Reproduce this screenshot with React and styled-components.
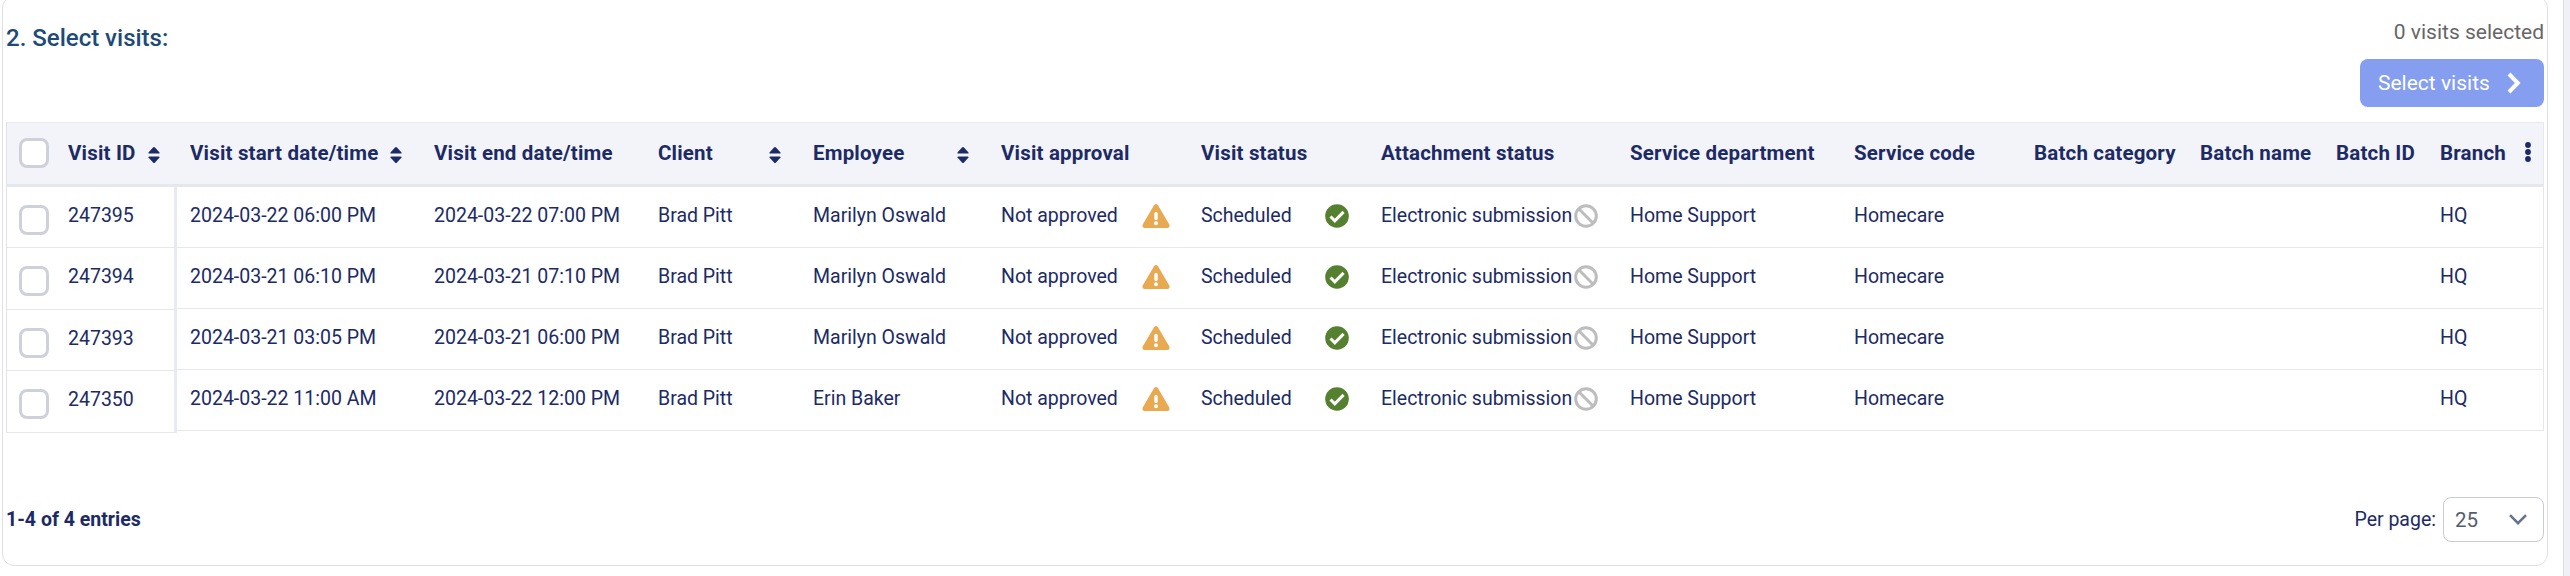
import React, { useState } from "react";
import styled, { createGlobalStyle } from "styled-components";

const GlobalStyle = createGlobalStyle`
  * {
    box-sizing: border-box;
  }
  body {
    margin: 0;
    background: #fff;
    font-family: Roboto, "Liberation Sans", sans-serif;
    color: #1c2a66;
  }
`;

const Page = styled.div`
  display: flex;
  justify-content: space-between;
  width: 2570px;
  height: 576px;
  overflow: hidden;
`;

const SideStrip = styled.div`
  width: 7px;
  background: #f0f1f7;
  border-left: 1px solid #dcdee6;
`;

const Panel = styled.section`
  width: 2546px;
  height: 570px;
  margin: -4px 0 0 2px;
  padding: 4px 3px 0;
  border: 1px solid #dfe1e4;
  border-radius: 12px;
`;

const PanelHeader = styled.header`
  display: flex;
  justify-content: space-between;
  height: 121px;
`;

const Title = styled.h2`
  margin: 22px 0 0;
  font-size: 24px;
  font-weight: 500;
  line-height: 30px;
  color: #1d4a78;
`;

const HeaderActions = styled.div`
  display: flex;
  flex-direction: column;
  align-items: flex-end;
`;

const Selected = styled.span`
  margin-top: 18px;
  font-size: 21px;
  line-height: 26px;
  color: #666;
`;

const SelectButton = styled.button`
  display: flex;
  align-items: center;
  justify-content: space-between;
  width: 184px;
  height: 48px;
  margin-top: 14px;
  padding: 0 23px 0 18px;
  border: 0;
  border-radius: 8px;
  background: #859ef0;
  color: #fff;
  font-family: inherit;
  font-size: 21px;
`;

const Table = styled.div`
  display: flex;
  align-items: flex-start;
  width: 2538px;
`;

const FrozenPane = styled.div`
  width: 171px;
`;

const ScrollPane = styled.div`
  flex: 1;
  border-right: 1px solid #e6e8eb;
`;

const HeadRow = styled.div`
  display: flex;
  align-items: center;
  height: 65px;
  padding: 0 0 1px ${(p) => p.$pad}px;
  border-top: 1px solid #e6e8ec;
  border-bottom: 3px solid #e4e8ec;
  background: #f3f4f9;
  border-left: ${(p) => (p.$frozen ? "1px solid #e0e4e9" : "0")};
`;

const Row = styled.div`
  display: flex;
  height: ${(p) => p.$height}px;
  padding-left: ${(p) => p.$pad}px;
  border-bottom: 1px solid #e6e9ec;
  border-left: ${(p) => (p.$frozen ? "1px solid #e0e4e9" : "0")};
  border-right: ${(p) => (p.$frozen ? "3px solid #e7ebf0" : "0")};
`;

const HeadCell = styled.div`
  display: flex;
  align-items: center;
  justify-content: space-between;
  flex: none;
  width: ${(p) => p.$width}px;
  padding-right: ${(p) => p.$padRight || 0}px;
  font-size: 20.5px;
  font-weight: 700;
  line-height: 24px;
  letter-spacing: 0.18px;
  white-space: nowrap;
`;

const Cell = styled.div`
  display: flex;
  align-items: center;
  justify-content: space-between;
  flex: none;
  width: ${(p) => p.$width}px;
  height: 24px;
  margin-top: 17px;
  padding-right: ${(p) => p.$padRight || 0}px;
  font-size: 19.5px;
  line-height: 24px;
  white-space: nowrap;
`;

const Checkbox = styled.input.attrs({ type: "checkbox" })`
  appearance: none;
  flex: none;
  width: 30px;
  height: 30px;
  margin: ${(p) => p.$top || 0}px 19px 0 0;
  border: 3px solid #ced1d9;
  border-radius: 8px;
  background: #fff;
`;

const Icon = styled.svg`
  display: block;
  flex: none;
`;

const SortSvg = styled(Icon)`
  margin-top: 3px;
`;

const DotsSvg = styled(Icon)`
  margin-bottom: 3px;
`;

const Footer = styled.footer`
  display: flex;
  align-items: center;
  justify-content: space-between;
  height: 45px;
  margin-top: 64px;
`;

const Entries = styled.strong`
  font-size: 19.5px;
  font-weight: 700;
`;

const PerPage = styled.div`
  display: flex;
  align-items: center;
  gap: 7px;
  font-size: 19.5px;
`;

const PageSize = styled.button`
  display: flex;
  align-items: center;
  justify-content: space-between;
  width: 101px;
  height: 45px;
  padding: 0 16px 0 11px;
  border: 1px solid #c9ccd3;
  border-radius: 8px;
  background: #fff;
  color: #535d6e;
  font-family: inherit;
  font-size: 20.5px;
`;

const SortIcon = () => (
  <SortSvg width="12" height="16" viewBox="0 0 12 16" fill="#1c2a66">
    <path d="M5 .6q1-1 2 0l4.300 4.600q.9 1.300-.6 1.300H1.300Q-.2 6.500.7 5.200z" />
    <path d="M5 15.400q1 1 2 0l4.300-4.600q.9-1.300-.6-1.300H1.300q-1.500 0-.6 1.300z" />
  </SortSvg>
);

const WarningIcon = () => (
  <Icon width="28" height="24" viewBox="0 0 28 24">
    <path d="M12 1.200q2-2.400 4 0l11.300 19.400q1 3-1.900 3.400H2.600Q-.3 23.600.7 20.600z" fill="#e8a951" />
    <path d="M14 9.500v5" stroke="#fff" strokeWidth="3.400" strokeLinecap="round" />
    <circle cx="14" cy="19.300" r="2" fill="#fff" />
  </Icon>
);

const CheckIcon = () => (
  <Icon width="24" height="24" viewBox="0 0 24 24">
    <circle cx="12" cy="12" r="11.800" fill="#54802f" />
    <path d="M5.500 12.500l4.300 4.300 8.800-8.900" fill="none" stroke="#fff" strokeWidth="3" />
  </Icon>
);

const BanIcon = () => (
  <Icon width="24" height="24" viewBox="0 0 24 24" fill="none" stroke="#bdbdbd" strokeWidth="3">
    <circle cx="12" cy="12" r="10.300" />
    <path d="M4.800 4.800l14.400 14.400" />
  </Icon>
);

const DotsIcon = () => (
  <DotsSvg width="6" height="20" viewBox="0 0 6 20" fill="#1c2a66">
    <circle cx="3" cy="3" r="2.900" />
    <circle cx="3" cy="10" r="2.900" />
    <circle cx="3" cy="17" r="2.900" />
  </DotsSvg>
);

const columns = [
  { key: "start", label: "Visit start date/time", width: 244, sort: 32 },
  { key: "end", label: "Visit end date/time", width: 224 },
  { key: "client", label: "Client", width: 155, sort: 32 },
  { key: "employee", label: "Employee", width: 188, sort: 32 },
  { key: "approval", label: "Visit approval", width: 200, icon: WarningIcon, iconPad: 31 },
  { key: "status", label: "Visit status", width: 180, icon: CheckIcon, iconPad: 32 },
  { key: "attachment", label: "Attachment status", width: 249, icon: BanIcon, iconPad: 32 },
  { key: "department", label: "Service department", width: 224 },
  { key: "code", label: "Service code", width: 180 },
  { key: "category", label: "Batch category", width: 166 },
  { key: "name", label: "Batch name", width: 136 },
  { key: "batchId", label: "Batch ID", width: 104 },
  { key: "branch", label: "Branch", width: 91, menu: true },
];

const visit = (id, start, end, employee) => ({
  id,
  start,
  end,
  client: "Brad Pitt",
  employee,
  approval: "Not approved",
  status: "Scheduled",
  attachment: "Electronic submission",
  department: "Home Support",
  code: "Homecare",
  branch: "HQ",
});

const visits = [
  visit("247395", "2024-03-22 06:00 PM", "2024-03-22 07:00 PM", "Marilyn Oswald"),
  visit("247394", "2024-03-21 06:10 PM", "2024-03-21 07:10 PM", "Marilyn Oswald"),
  visit("247393", "2024-03-21 03:05 PM", "2024-03-21 06:00 PM", "Marilyn Oswald"),
  visit("247350", "2024-03-22 11:00 AM", "2024-03-22 12:00 PM", "Erin Baker"),
];

const App = () => {
  const [selected, setSelected] = useState([]);

  const toggle = (id) => {
    setSelected(selected.includes(id) ? selected.filter((v) => v !== id) : [...selected, id]);
  };

  const toggleAll = () => {
    setSelected(selected.length === visits.length ? [] : visits.map((v) => v.id));
  };

  return (
    <>
      <GlobalStyle />
      <Page>
        <Panel>
          <PanelHeader>
            <Title>2. Select visits:</Title>
            <HeaderActions>
              <Selected>{selected.length} visits selected</Selected>
              <SelectButton>
                Select visits
                <Icon width="14" height="22" viewBox="0 0 14 22" fill="none" stroke="#fff" strokeWidth="4">
                  <path d="M2 2l8.800 9L2 20" />
                </Icon>
              </SelectButton>
            </HeaderActions>
          </PanelHeader>

          <Table>
            <FrozenPane>
              <HeadRow $frozen $pad={12}>
                <Checkbox checked={selected.length === visits.length} onChange={toggleAll} />
                <HeadCell $width={92}>
                  Visit ID
                  <SortIcon />
                </HeadCell>
              </HeadRow>
              {visits.map((v, i) => (
                <Row key={v.id} $frozen $pad={12} $height={i % 2 ? 62 : 61}>
                  <Checkbox $top={18} checked={selected.includes(v.id)} onChange={() => toggle(v.id)} />
                  <Cell $width={92}>{v.id}</Cell>
                </Row>
              ))}
            </FrozenPane>
            <ScrollPane>
              <HeadRow $pad={13}>
                {columns.map((c) => (
                  <HeadCell key={c.key} $width={c.width} $padRight={c.sort}>
                    {c.label}
                    {c.sort && <SortIcon />}
                    {c.menu && <DotsIcon />}
                  </HeadCell>
                ))}
              </HeadRow>
              {visits.map((v) => (
                <Row key={v.id} $pad={13} $height={61}>
                  {columns.map((c) => (
                    <Cell key={c.key} $width={c.width} $padRight={c.iconPad}>
                      {v[c.key]}
                      {c.icon && <c.icon />}
                    </Cell>
                  ))}
                </Row>
              ))}
            </ScrollPane>
          </Table>

          <Footer>
            <Entries>1-4 of 4 entries</Entries>
            <PerPage>
              Per page:
              <PageSize>
                25
                <Icon width="18" height="11" viewBox="0 0 18 11" fill="none" stroke="#68748c" strokeWidth="2.600">
                  <path d="M1 1.200l8 8 8-8" />
                </Icon>
              </PageSize>
            </PerPage>
          </Footer>
        </Panel>
        <SideStrip />
      </Page>
    </>
  );
};

export default App;
